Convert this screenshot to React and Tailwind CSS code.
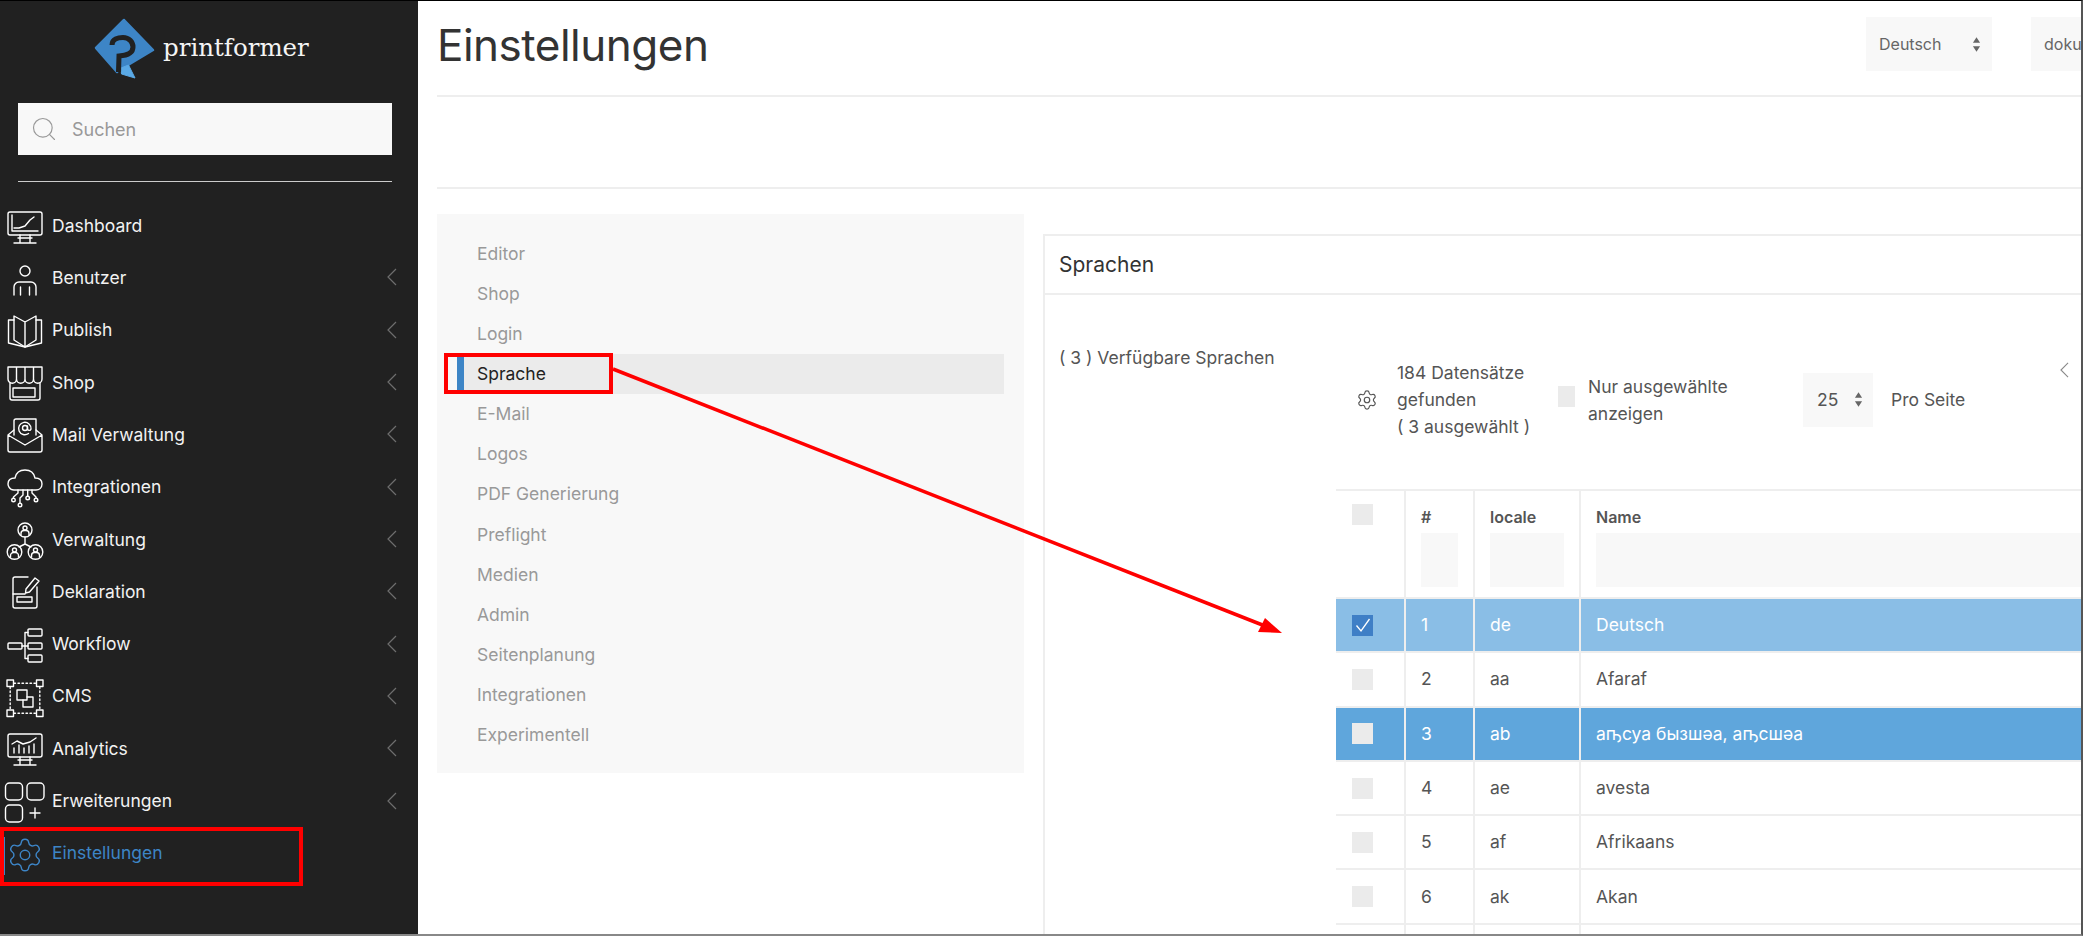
import React from 'react';
import { Settings, Search } from 'lucide-react';

const IconBox = ({ children }) => (
  <svg viewBox="0 0 38 38" className="w-[38px] h-[38px] shrink-0 overflow-visible" fill="none" stroke="currentColor" strokeWidth="1.4" strokeLinejoin="round" strokeLinecap="round">
    {children}
  </svg>
);

const Person = ({ x, y }) => (
  <>
    <circle cx={x} cy={y - 2} r="2" />
    <path d={`M${x - 4} ${y + 5}v-1.5a3 3 0 0 1 3-3h2a3 3 0 0 1 3 3v1.5`} />
  </>
);

const icons = {
  dashboard: (
    <IconBox>
      <rect x="2" y="6" width="34" height="23" rx="2" />
      <path d="M6 9v16h26M8 22h5l6-2 5-6 4-3M14 29v7M24 29v7M8 37h22M12 32h14" />
    </IconBox>
  ),
  user: (
    <IconBox>
      <circle cx="19" cy="13" r="5" />
      <path d="M8 37v-8a5 5 0 0 1 5-5h12a5 5 0 0 1 5 5v8M14.5 29v8M23.5 29v8" />
    </IconBox>
  ),
  book: (
    <IconBox>
      <path d="M19 11 8 5v24l11 7M19 11 30 5v24l-11 7zM19 11v25" />
      <path d="M8 9H2.5v23L19 36l16.500-4V9H30" />
    </IconBox>
  ),
  shop: (
    <IconBox>
      <path d="M2 4h34v12a4.250 4.250 0 0 1-8.500 0 4.250 4.250 0 0 1-8.500 0 4.250 4.250 0 0 1-8.500 0 4.250 4.250 0 0 1-8.500 0zM10.500 4v12M19 4v12M27.500 4v12" />
      <path d="M4 20v15a2 2 0 0 0 2 2h26a2 2 0 0 0 2-2V20" />
      <rect x="7" y="25" width="22" height="9" />
    </IconBox>
  ),
  mail: (
    <IconBox>
      <path d="M8 15 2 20v15a2 2 0 0 0 2 2h30a2 2 0 0 0 2-2V20l-6-5M2 20l17 10 17-10" />
      <path d="M8 20V6a2 2 0 0 1 2-2h20v16" />
      <circle cx="19" cy="13" r="2.500" />
      <path d="M21.500 11v3a1.800 1.800 0 0 0 3.500 0 6.200 6.200 0 1 0-2.500 4.500" />
    </IconBox>
  ),
  cloud: (
    <IconBox>
      <path d="M8 22c-5 0-6-5-6-6 0-4 3-6 7-6 1-5 5-8 10-8s9 3 10 8c4 0 7 2 7 6 0 4-3 6-6 6z" />
      <path d="M12 22v3l-4.500 4v1M17 22v5l-3 3v5M21.700 22v6M26 22v3l4 4v1" />
      <circle cx="7.500" cy="32" r="1.800" />
      <circle cx="14" cy="37" r="1.800" />
      <circle cx="21.700" cy="30" r="1.800" />
      <circle cx="30" cy="32" r="1.800" />
    </IconBox>
  ),
  org: (
    <IconBox>
      <circle cx="19" cy="10" r="7" />
      <circle cx="8.500" cy="32" r="7.300" />
      <circle cx="29.500" cy="32" r="7.300" />
      <path d="M19 17v7l-6 3M19 24l6 3" />
      <Person x={19} y={10} />
      <Person x={8.5} y={32} />
      <Person x={29.5} y={32} />
    </IconBox>
  ),
  declaration: (
    <IconBox>
      <path d="M22 5H9a2 2 0 0 0-2 2v27a2 2 0 0 0 2 2h20a2 2 0 0 0 2-2V15" />
      <path d="m20 17 9-11 4 3-9.500 11-4 1zM7 22h12" />
      <rect x="11" y="25" width="15" height="5" />
    </IconBox>
  ),
  workflow: (
    <IconBox>
      <rect x="2" y="18" width="14" height="6" rx="1" />
      <rect x="22" y="4" width="14" height="7" rx="1" />
      <rect x="22" y="18" width="14" height="6" rx="1" />
      <rect x="22" y="30" width="14" height="7" rx="1" />
      <path d="M16 21h6M22 7.500h-3v26h3" />
    </IconBox>
  ),
  cms: (
    <IconBox>
      <rect x="1" y="3" width="6.500" height="6.500" />
      <rect x="30.500" y="3" width="6.500" height="6.500" />
      <rect x="1" y="33" width="6.500" height="6.500" />
      <rect x="30.500" y="33" width="6.500" height="6.500" />
      <path d="M8 6.200h22M8 36.200h22M4.200 10v23M33.800 10v23" strokeDasharray="1.500 2.500" />
      <rect x="11" y="13" width="10" height="10" />
      <path d="M21 20h6v10H17v-7" />
    </IconBox>
  ),
  analytics: (
    <IconBox>
      <rect x="2" y="5" width="34" height="23" rx="2" />
      <path d="M14 28v7M24 28v7M8 36h22M12 31h14" />
      <path d="m6 15 5-3 6 3 7-2 6-4M8 24v-5M13 24v-8M18 24v-5M23 24v-7M28 24v-9" />
    </IconBox>
  ),
  extensions: (
    <IconBox>
      <rect x="-0.5" y="1" width="17" height="17" rx="4" />
      <rect x="21" y="1" width="17" height="17" rx="4" />
      <rect x="-0.5" y="23" width="17" height="17" rx="4" />
      <path d="M24 31h10M29 26v10" />
    </IconBox>
  ),
};

const menu = [
  { label: 'Dashboard', icon: icons.dashboard },
  { label: 'Benutzer', icon: icons.user, sub: true },
  { label: 'Publish', icon: icons.book, sub: true },
  { label: 'Shop', icon: icons.shop, sub: true },
  { label: 'Mail Verwaltung', icon: icons.mail, sub: true },
  { label: 'Integrationen', icon: icons.cloud, sub: true },
  { label: 'Verwaltung', icon: icons.org, sub: true },
  { label: 'Deklaration', icon: icons.declaration, sub: true },
  { label: 'Workflow', icon: icons.workflow, sub: true },
  { label: 'CMS', icon: icons.cms, sub: true },
  { label: 'Analytics', icon: icons.analytics, sub: true },
  { label: 'Erweiterungen', icon: icons.extensions, sub: true },
];

const settingsNav = ['Editor', 'Shop', 'Login', 'Sprache', 'E-Mail', 'Logos', 'PDF Generierung', 'Preflight', 'Medien', 'Admin', 'Seitenplanung', 'Integrationen', 'Experimentell'];

const rows = [
  { id: 1, locale: 'de', name: 'Deutsch', state: 'checked' },
  { id: 2, locale: 'aa', name: 'Afaraf' },
  { id: 3, locale: 'ab', name: 'аҧсуа бызшәа, аҧсшәа', state: 'active' },
  { id: 4, locale: 'ae', name: 'avesta' },
  { id: 5, locale: 'af', name: 'Afrikaans' },
  { id: 6, locale: 'ak', name: 'Akan' },
];

const Chevron = ({ className }) => (
  <svg viewBox="0 0 10 18" className={className} fill="none" stroke="currentColor" strokeWidth="1.2">
    <path d="M9 1 1 9l8 8" />
  </svg>
);

const UpDown = () => (
  <svg viewBox="0 0 10 16" className="w-[9px] h-[15px] shrink-0" fill="#666">
    <path d="M5 0l4 6H1zM5 16l4-6H1z" />
  </svg>
);

const Checkbox = ({ className, children }) => (
  <div className={`h-[21px] flex items-center justify-center ${className}`}>{children}</div>
);

function Sidebar() {
  return (
    <aside className="w-[418px] shrink-0 bg-[#212121] text-white flex flex-col">
      <div className="h-[102px] flex items-start pl-[93px] pt-[16px]">
        <svg viewBox="0 0 62 64" className="w-[62px] h-[64px] shrink-0">
          <path d="M31 3 60 33 35 48 27 51 24 55 3 31z" fill="#3d85c6" stroke="#3d85c6" strokeWidth="2.500" strokeLinejoin="round" />
          <path d="M28 51 35.500 48 42 61 28.500 57z" fill="#5aa9e6" stroke="#5aa9e6" strokeWidth="1" strokeLinejoin="round" />
          <path d="M19 28C19 22 25 20.500 30 20.500 36 20.500 40 25 40 30 40 36 34 38.500 26 39L25.500 55" fill="none" stroke="#212121" strokeWidth="5" />
        </svg>
        <span className="font-['DejaVu_Serif',serif] text-[24.5px] leading-none ml-[8px] mt-[19px] text-[#f4f4f4]">printformer</span>
      </div>
      <div className="ml-[18px] w-[374px] h-[52px] bg-[#f8f8f8] flex items-center pl-[12px] gap-[14px] text-[#999]">
        <Search size={28} strokeWidth={1} />
        <span className="text-[18px]">Suchen</span>
      </div>
      <div className="ml-[18px] w-[374px] mt-[26px] mb-[17px] h-px bg-[#ccc]" />
      <nav className="flex flex-col">
        {menu.map((m) => (
          <div key={m.label} className="h-[52.33px] flex items-center pl-[6px] pr-[21px] gap-[8px]">
            {m.icon}
            <span className="text-[17.5px] flex-1 pt-[1px] text-[#f2f2f2]">{m.label}</span>
            {m.sub && <Chevron className="w-[10px] h-[18px] text-[#6e6e6e]" />}
          </div>
        ))}
        <div className="relative h-[52.33px] flex items-center pl-[6px] gap-[8px] text-[#3d85c6]">
          <span className="absolute left-[4px] top-[10px] h-[38px] w-px bg-[#3d85c6]" />
          <Settings size={38} strokeWidth={0.9} className="shrink-0 mt-[3px]" />
          <span className="text-[17.5px] pt-[1px]">Einstellungen</span>
        </div>
      </nav>
    </aside>
  );
}

function LanguageTable() {
  return (
    <table className="w-[745px] table-fixed border-collapse text-[17.5px] text-[#555]">
      <colgroup>
        <col className="w-[69px]" />
        <col className="w-[69px]" />
        <col className="w-[106px]" />
        <col />
      </colgroup>
      <thead>
        <tr className="border-y-2 border-[#eee] align-top">
          <th className="border-r-2 border-[#eee] pl-[16px] pt-[13px] h-[108px]">
            <Checkbox className="w-[21px] bg-[#ebebeb]" />
          </th>
          <th className="border-r-2 border-[#eee] px-[15px] pt-[14px] text-left text-[16px] font-semibold leading-[24px]">
            #
            <div className="mt-[4px] h-[54px] bg-[#f8f8f8]" />
          </th>
          <th className="border-r-2 border-[#eee] px-[15px] pt-[14px] text-left text-[16px] font-semibold leading-[24px]">
            locale
            <div className="mt-[4px] h-[54px] bg-[#f8f8f8]" />
          </th>
          <th className="pl-[15px] pt-[14px] text-left text-[16px] font-semibold leading-[24px]">
            Name
            <div className="mt-[4px] h-[54px] bg-[#f8f8f8]" />
          </th>
        </tr>
      </thead>
      <tbody>
        {rows.map((r) => {
          const bg = r.state === 'checked' ? 'bg-[#8abee6] text-white' : r.state === 'active' ? 'bg-[#5fa6dc] text-white' : '';
          return (
            <tr key={r.id} className={`h-[54.3px] border-b-2 border-[#eee] ${bg}`}>
              <td className="border-r-2 border-[#eee] pl-[16px]">
                {r.state === 'checked' ? (
                  <Checkbox className="w-[21px] bg-[#3f7fc6]">
                    <svg viewBox="0 0 16 16" className="w-[16px] h-[16px]" fill="none" stroke="white" strokeWidth="1.300">
                      <path d="M1.500 8.500 6 14l8.500-12" />
                    </svg>
                  </Checkbox>
                ) : (
                  <Checkbox className="w-[21px] bg-[#ebebeb]" />
                )}
              </td>
              <td className="border-r-2 border-[#eee] pl-[15px]">{r.id}</td>
              <td className="border-r-2 border-[#eee] pl-[15px]">{r.locale}</td>
              <td className="pl-[15px]">{r.name}</td>
            </tr>
          );
        })}
        <tr className="h-[54.3px]">
          <td className="border-r-2 border-[#eee]" />
          <td className="border-r-2 border-[#eee]" />
          <td className="border-r-2 border-[#eee]" />
          <td />
        </tr>
      </tbody>
    </table>
  );
}

function Main() {
  return (
    <main className="flex-1 min-w-0 overflow-hidden text-[#555]">
      <header className="ml-[19px] h-[96px] border-b-2 border-[#eee] flex items-start">
        <h1 className="flex-1 text-[44px] tracking-[-0.5px] leading-[88px] text-[#333]">Einstellungen</h1>
        <div className="mt-[16px] w-[126px] h-[54px] bg-[#f8f8f8] flex items-center justify-between pl-[13px] pr-[11px] text-[16px] text-[#666]">
          Deutsch
          <UpDown />
        </div>
        <div className="mt-[16px] ml-[39px] w-[50px] h-[54px] bg-[#f8f8f8] flex items-center pl-[13px] text-[16px] text-[#666] overflow-hidden whitespace-nowrap">
          dokumentation
        </div>
      </header>
      <div className="ml-[19px] h-[92px] border-b-2 border-[#eee]" />
      <div className="flex items-start ml-[19px] mt-[25px]">
        <nav className="w-[587px] h-[559px] shrink-0 bg-[#f8f8f8] pt-[20px] px-[20px] flex flex-col text-[17.5px] text-[#999]">
          {settingsNav.map((item) =>
            item === 'Sprache' ? (
              <div key={item} className="h-[40.1px] shrink-0 bg-[#ebebeb] flex items-center text-[#222]">
                <span className="w-[7px] h-full bg-[#3d85c6]" />
                <span className="ml-[13px]">{item}</span>
              </div>
            ) : (
              <div key={item} className="h-[40.1px] shrink-0 flex items-center pl-[20px]">{item}</div>
            )
          )}
        </nav>
        <section className="ml-[19px] mt-[20px] w-[1100px] shrink-0 border-l-2 border-t-2 border-[#eee]">
          <div className="h-[59px] border-b-2 border-[#eee] flex items-center pl-[14px] text-[21px] text-[#333]">Sprachen</div>
          <div className="flex text-[17.5px]">
            <div className="w-[291px] shrink-0 pl-[14px] pt-[49px] leading-[27px]">( 3 ) Verfügbare Sprachen</div>
            <div className="flex-1">
              <div className="h-[81px] mt-[64px] mb-[49px] flex items-center leading-[27px]">
                <Settings size={22} strokeWidth={1.3} className="ml-[20px] mr-[19px] shrink-0" />
                <div className="w-[161px] shrink-0">184 Datensätze gefunden<br />( 3 ausgewählt )</div>
                <Checkbox className="w-[17px] bg-[#ebebeb] mr-[13px] shrink-0 -mt-[6px]" />
                <div className="w-[215px] shrink-0 pr-[50px]">Nur ausgewählte anzeigen</div>
                <div className="w-[70px] h-[54px] shrink-0 bg-[#f8f8f8] flex items-center justify-between pl-[14px] pr-[10px]">
                  25
                  <UpDown />
                </div>
                <span className="ml-[18px] w-[169px] shrink-0">Pro Seite</span>
                <Chevron className="w-[9px] h-[16px] -mt-[60px] text-[#888] shrink-0" />
              </div>
              <LanguageTable />
            </div>
          </div>
        </section>
      </div>
    </main>
  );
}

export default function App() {
  return (
    <div className="relative w-[2083px] h-[939px] bg-white overflow-hidden font-['Inter',sans-serif]">
      <div className="h-[936px] flex border-t border-t-black border-b-2 border-b-[#888] border-r-2 border-r-[#555] overflow-hidden">
        <Sidebar />
        <Main />
      </div>
      {/* annotations */}
      <div className="absolute left-0 top-[827px] w-[303px] h-[59px] border-4 border-[#f00]" />
      <div className="absolute left-[444px] top-[353px] w-[169px] h-[41px] border-4 border-[#f00]" />
      <svg className="absolute left-0 top-0 w-[2083px] h-[939px] pointer-events-none" viewBox="0 0 2083 939">
        <path d="M613 369 1265 626" stroke="#f00" strokeWidth="3.500" fill="none" />
        <path d="M1282 633 1258 632 1265 618z" fill="#f00" />
      </svg>
    </div>
  );
}
